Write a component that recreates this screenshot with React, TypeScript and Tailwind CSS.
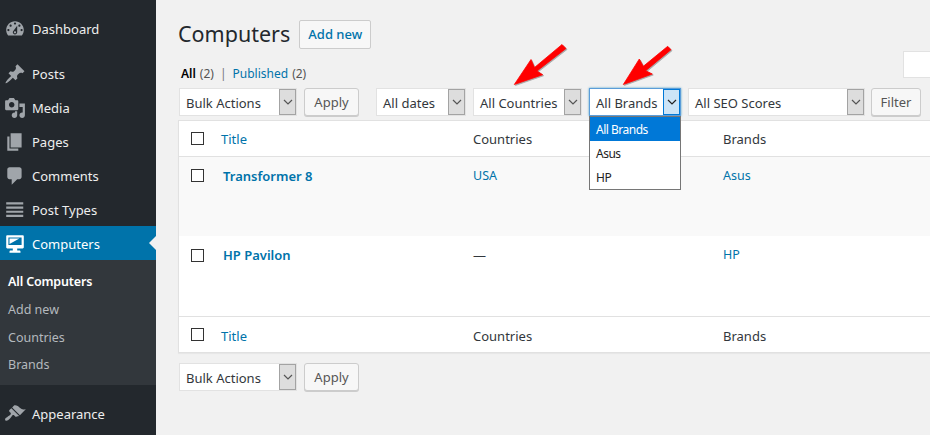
const icons: Record<string, string> = {
  dashboard:
    "M3.76 16h12.48c1.1-1.37 1.76-3.11 1.76-5 0-4.42-3.58-8-8-8s-8 3.58-8 8c0 1.89.66 3.63 1.76 5zM10 4c.55 0 1 .45 1 1s-.45 1-1 1-1-.45-1-1 .45-1 1-1zM6 6c.55 0 1 .45 1 1s-.45 1-1 1-1-.45-1-1 .45-1 1-1zm8 0c.55 0 1 .45 1 1s-.45 1-1 1-1-.45-1-1 .45-1 1-1zm-5.37 5.55L12 7v6c0 1.1-.9 2-2 2s-2-.9-2-2c0-.57.24-1.08.63-1.45zM4 10c.55 0 1 .45 1 1s-.45 1-1 1-1-.45-1-1 .45-1 1-1zm12 0c.55 0 1 .45 1 1s-.45 1-1 1-1-.45-1-1 .45-1 1-1zm-5 3c0-.55-.45-1-1-1s-1 .45-1 1 .45 1 1 1 1-.45 1-1z",
  pin: "M10.44 3.02l1.82-1.82 6.36 6.35-1.83 1.82c-1.05-.68-2.48-.57-3.41.36l-.75.75c-.92.93-1.04 2.35-.35 3.41l-1.83 1.82-2.41-2.41-2.8 2.79c-.42.42-3.38 2.71-3.8 2.29s1.86-3.39 2.28-3.81l2.79-2.79L4.1 9.36l1.83-1.82c1.05.69 2.48.57 3.4-.36l.75-.75c.93-.92 1.05-2.35.36-3.41z",
  media:
    "M13 11V4c0-.55-.45-1-1-1h-1.67L9 1H5L3.67 3H2c-.55 0-1 .45-1 1v7c0 .55.45 1 1 1h10c.55 0 1-.45 1-1zM7 4.5c1.38 0 2.5 1.12 2.5 2.5S8.38 9.5 7 9.5 4.5 8.38 4.5 7 5.62 4.5 7 4.5zM14 6h5v10.5c0 1.38-1.12 2.5-2.5 2.5S14 17.88 14 16.5s1.12-2.5 2.5-2.5c.17 0 .34.02.5.05V9h-3V6zm-4 8.05V13h2v3.5c0 1.38-1.12 2.5-2.5 2.5S7 17.88 7 16.5 8.12 14 9.5 14c.17 0 .34.02.5.05z",
  page: "M6 15V2h10v13H6zm-1 1h8v2H3V5h2v11z",
  comments: "M5 2h9c1.1 0 2 .9 2 2v7c0 1.1-.9 2-2 2h-2l-5 5v-5H5c-1.1 0-2-.9-2-2V4c0-1.1.9-2 2-2z",
  menu: "M2 3h15.5v2H2zM2 6.8h15.5v2H2zM2 10.6h15.5v2H2zM2 14.4h15.5v2H2z",
  desktop:
    "M3 2h14c.55 0 1 .45 1 1v10c0 .55-.45 1-1 1h-5v2h2c.55 0 1 .45 1 1v1H5v-1c0-.55.45-1 1-1h2v-2H3c-.55 0-1-.45-1-1V3c0-.55.45-1 1-1zm13 9V4H4v7h12zM5 5h9L5 10V5z",
  appearance:
    "M14.48 11.06L7.41 3.99l1.5-1.5c.5-.56 2.3-.47 3.51.32 1.21.8 1.43 1.28 2.91 2.1 1.18.64 2.45 1.26 4.45.85zm-.71.71L6.7 4.7 4.93 6.47c-.39.39-.39 1.02 0 1.41l1.06 1.06c.39.39.39 1.03 0 1.42-.6.6-1.43 1.11-2.21 1.69-.35.26-.7.53-1.01.84C1.43 13.23.4 14.89 1.3 15.8c.9.9 2.57-.12 3.9-1.47.31-.31.58-.66.84-1.01.58-.78 1.09-1.61 1.69-2.21.39-.39 1.02-.39 1.41 0l1.06 1.06c.39.39 1.02.39 1.41 0z",
};

const MenuItem = ({ icon, label, active }: { icon: string; label: string; active?: boolean }) => (
  <div className={`relative flex h-[34px] items-center gap-[6px] pl-[4px] ${active ? "bg-[#0073aa] pt-[2px] text-white" : "text-[#eee]"}`}>
    <svg viewBox="0 0 20 20" className={`h-[22px] w-[22px] ${active ? "fill-white" : "fill-[#a0a5aa]"}`}>
      <path d={icons[icon]} />
    </svg>
    <span className="pt-[2px]">{label}</span>
    {active && (
      <span className="absolute right-0 top-[10px] h-0 w-0 border-y-[7px] border-r-[7px] border-y-transparent border-r-[#f1f1f1]" />
    )}
  </div>
);

const Chevron = () => (
  <svg viewBox="0 0 10 6" className="h-[6px] w-[10px] fill-none stroke-current stroke-[1.2]">
    <path d="M1 1l4 4 4-4" />
  </svg>
);

const Select = ({ label, width, open }: { label: string; width: string; open?: boolean }) => (
  <div className={`flex h-[28px] items-stretch border bg-white ${width} ${open ? "border-[#5b9dd9] shadow-[0_0_2px_rgba(30,140,190,.8)]" : "border-[#e2e2e2]"}`}>
    <span className="flex-1 truncate pl-[6px] leading-[29px] text-[#32373c]">{label}</span>
    <span
      className={`flex w-[17px] items-center justify-center border ${
        open ? "border-[#0078d7] bg-[#cce4f7] text-[#222]" : "border-[#a3a3a3] bg-[#dddddd] text-[#555]"
      }`}
    >
      <Chevron />
    </span>
  </div>
);

const Button = ({ label, width }: { label: string; width: string }) => (
  <div className={`flex h-[28px] items-center justify-center rounded-[3px] border border-[#cccccc] bg-[#f7f7f7] pt-[2px] text-[#555] shadow-[0_1px_0_#ccc] ${width}`}>
    {label}
  </div>
);

const Checkbox = () => <span className="block h-[13px] w-[13px] border border-[#333] bg-white" />;

const HeadRow = ({ top }: { top?: boolean }) => (
  <div className={`flex h-[36px] items-center border-[#e1e1e1] ${top ? "border-b" : "border-t"}`}>
    <div className="w-[42px] pl-[12px]">
      <Checkbox />
    </div>
    <span className={`w-[252px] text-[#0073aa] ${top ? "pt-[2px]" : "pt-[4px]"}`}>Title</span>
    <span className={`w-[250px] text-[#32373c] ${top ? "pt-[2px]" : "pt-[4px]"}`}>Countries</span>
    <span className={`text-[#32373c] ${top ? "pt-[2px]" : "pt-[4px]"}`}>Brands</span>
  </div>
);

const Row = ({ title, country, brand, alt }: { title: string; country: string; brand: string; alt?: boolean }) => (
  <div className={`flex items-start pt-[10px] ${alt ? "h-[79px] bg-[#f9f9f9]" : "h-[80px] bg-white"}`}>
    <div className={`w-[42px] pl-[12px] ${alt ? "pt-[2px]" : "pt-[3px]"}`}>
      <Checkbox />
    </div>
    <span className="w-[252px] pl-[2px] font-semibold text-[#0073aa]">{title}</span>
    <span className={`w-[250px] ${country === "USA" ? "text-[12.5px] leading-[17px] text-[#0073aa]" : "text-[#32373c]"}`}>{country}</span>
    <span className="text-[12.5px] leading-[17px] text-[#0073aa]">{brand}</span>
  </div>
);

export default function App() {
  return (
    <div className="flex h-[435px] w-[930px] overflow-hidden bg-[#f1f1f1] font-['Noto_Sans',sans-serif] text-[13px]">
      {/* sidebar */}
      <aside className="h-full w-[156px] shrink-0 bg-[#23282d] pt-3">
        <MenuItem icon="dashboard" label="Dashboard" />
        <div className="h-[11px]" />
        <MenuItem icon="pin" label="Posts" />
        <MenuItem icon="media" label="Media" />
        <MenuItem icon="page" label="Pages" />
        <MenuItem icon="comments" label="Comments" />
        <div className="-mb-px">
          <MenuItem icon="menu" label="Post Types" />
        </div>
        <MenuItem icon="desktop" label="Computers" active />
        <div className="flex h-[125px] flex-col bg-[#32373c] pl-2 pt-2 text-[12.5px] text-[#b4b9be]">
          <span className="flex h-[28px] items-center font-semibold tracking-[-0.15px] text-white">All Computers</span>
          <span className="flex h-[28px] items-center">Add new</span>
          <span className="flex h-[28px] items-center">Countries</span>
          <span className="flex h-[26px] items-center">Brands</span>
        </div>
        <div className="h-[12px]" />
        <MenuItem icon="appearance" label="Appearance" />
      </aside>

      {/* main */}
      <main className="relative min-w-0 flex-1 pl-[22px] pt-[19px]">
        <div className="flex h-[30px] items-center">
          <h1 className="text-[21.5px] leading-[30px] text-[#23282d]">Computers</h1>
          <div className="ml-[9px] flex h-[29px] w-[72px] items-center justify-center rounded-[2px] border border-[#ccc] bg-[#f7f7f7] pt-[2px] font-medium text-[#0073aa]">
            Add new
          </div>
        </div>

        <div className="mt-[15px] flex h-[18px] items-center pl-[3px] pt-[2px] text-[12px] text-[#555]">
          <b className="font-semibold text-black">All</b>
          <span className="ml-1">(2)</span>
          <span className="mx-[6px] text-[#777]">|</span>
          <span className="text-[#0073aa]">Published</span>
          <span className="ml-1">(2)</span>
        </div>

        <div className="mt-[6px] flex items-center pl-[1px]">
          <Select label="Bulk Actions" width="w-[118px]" />
          <div className="ml-[7px]">
            <Button label="Apply" width="w-[55px]" />
          </div>
          <div className="ml-[17px]">
            <Select label="All dates" width="w-[90px]" />
          </div>
          <div className="ml-[7px]">
            <Select label="All Countries" width="w-[109px]" />
          </div>
          <div className="relative ml-[7px]">
            <Select label="All Brands" width="w-[92px]" open />
            <div className="absolute left-0 top-[28px] z-10 w-[92px] border border-[#767676] bg-white text-[12px] tracking-[-0.5px] text-[#222]">
              <div className="flex h-[24px] items-center bg-[#0078d7] pl-[6px] pt-[2px] text-white">All Brands</div>
              <div className="flex h-[24px] items-center pl-[6px] pt-[2px]">Asus</div>
              <div className="flex h-[24px] items-center pl-[6px] pt-[2px]">HP</div>
            </div>
          </div>
          <div className="ml-[7px]">
            <Select label="All SEO Scores" width="w-[177px]" />
          </div>
          <div className="ml-[6px]">
            <Button label="Filter" width="w-[50px]" />
          </div>
        </div>

        <div className="mt-[4px] border border-r-0 border-[#e1e1e1] bg-white shadow-[0_1px_1px_rgba(0,0,0,.04)]">
          <HeadRow top />
          <Row title="Transformer 8" country="USA" brand="Asus" alt />
          <Row title="HP Pavilon" country="—" brand="HP" />
          <HeadRow />
        </div>

        <div className="mt-[10px] flex items-center pl-[1px]">
          <Select label="Bulk Actions" width="w-[118px]" />
          <div className="ml-[7px]">
            <Button label="Apply" width="w-[55px]" />
          </div>
        </div>

        {/* search box, cut by the window edge */}
        <div className="absolute left-[747px] top-[51px] h-[27px] w-[40px] border border-[#e2e2e2] bg-white" />

        {/* red annotation arrows */}
        <svg viewBox="0 0 774 100" className="pointer-events-none absolute left-0 top-0 h-[100px] w-[774px] drop-shadow-[1px_1px_0_rgba(0,0,0,.3)]">
          <polygon fill="#f00" stroke="#f00" strokeLinejoin="round" strokeWidth="0.8" points="358.3,84.5 375,59.5 378.5,67.5 406,44.5 410,48.5 381,71 386.7,74.7" />
          <polygon fill="#f00" stroke="#f00" strokeLinejoin="round" strokeWidth="0.8" points="467.3,84.5 483.3,59 487.3,66.3 511.7,46.3 515,49.7 489.7,70.7 496.3,74" />
        </svg>
      </main>
    </div>
  );
}
